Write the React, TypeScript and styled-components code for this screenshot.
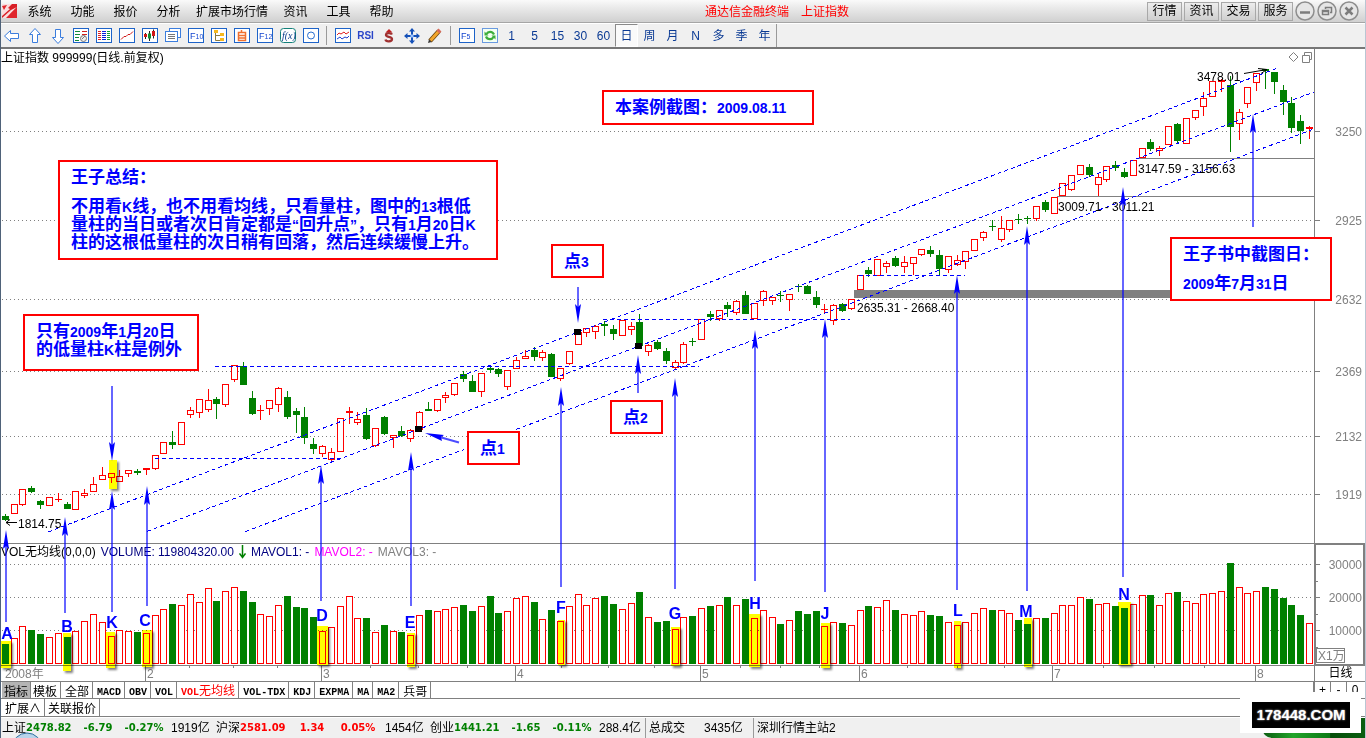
import React from "react";
import styled, { createGlobalStyle } from "styled-components";

const GlobalStyle = createGlobalStyle`
  *, *::before, *::after { box-sizing: border-box; }
  html, body { margin: 0; background: #fff; }
  body {
    font: 12px/16px "Liberation Sans", "Noto Sans CJK SC", sans-serif;
    color: #000;
  }
  button { font: inherit; color: inherit; margin: 0; padding: 0; border: 0; background: none; }
`;

const RED = "#ff0000";
const GREEN = "#008000";
const BLUE = "#0000ff";
const GRAY = "#808080";

/* ---------- data ---------- */

type Bar = [string, number, number, number, number, number];

/* colour, high, body top, body bottom, low, volume top */
const BARS: Bar[] = [
  ["G", 514, 516, 520, 521, 644], ["R", 504, 504, 514, 514, 638], ["R", 489, 489, 505, 506, 626],
  ["G", 486, 488, 492, 493, 630], ["G", 500, 501, 505, 509, 634], ["R", 497, 497, 506, 506, 637],
  ["R", 493, 499, 500, 502, 633], ["G", 502, 504, 509, 509, 637], ["R", 491, 491, 510, 510, 631],
  ["R", 489, 493, 496, 498, 621], ["R", 477, 484, 492, 492, 614], ["R", 467, 475, 480, 480, 622],
  ["R", 473, 473, 478, 483, 636], ["R", 470, 476, 482, 482, 630], ["R", 470, 470, 474, 477, 631],
  ["G", 469, 471, 473, 475, 632], ["R", 468, 468, 470, 475, 633], ["R", 455, 455, 469, 470, 615],
  ["R", 442, 442, 454, 454, 609], ["G", 431, 442, 445, 449, 604], ["R", 422, 422, 445, 445, 605],
  ["R", 407, 410, 415, 418, 594], ["R", 399, 399, 413, 418, 602], ["R", 389, 400, 410, 412, 588],
  ["G", 397, 399, 404, 419, 601], ["R", 384, 384, 405, 407, 591], ["R", 365, 365, 380, 382, 587],
  ["G", 362, 366, 385, 385, 591], ["G", 391, 398, 414, 415, 602], ["R", 405, 410, 411, 420, 614],
  ["R", 400, 400, 409, 415, 616], ["R", 387, 388, 405, 412, 605], ["G", 391, 397, 417, 419, 596],
  ["G", 408, 411, 415, 433, 607], ["G", 407, 417, 438, 444, 608], ["G", 438, 444, 449, 454, 617],
  ["R", 445, 446, 454, 457, 631], ["R", 448, 452, 460, 461, 627], ["R", 418, 418, 452, 452, 606],
  ["R", 407, 411, 413, 424, 596], ["R", 412, 419, 423, 425, 618], ["G", 408, 415, 439, 440, 618],
  ["R", 428, 428, 446, 447, 632], ["G", 416, 417, 434, 435, 625], ["R", 435, 435, 438, 448, 631],
  ["G", 426, 431, 436, 437, 632], ["R", 429, 430, 439, 442, 635], ["R", 411, 412, 430, 430, 615],
  ["G", 402, 409, 411, 411, 610], ["R", 399, 399, 411, 412, 611], ["R", 392, 395, 398, 403, 609],
  ["R", 383, 383, 395, 396, 607], ["G", 371, 374, 379, 382, 605], ["G", 375, 381, 392, 392, 611],
  ["R", 373, 373, 392, 397, 606], ["G", 366, 368, 370, 373, 596], ["G", 368, 369, 374, 377, 613],
  ["R", 370, 370, 387, 390, 611], ["R", 357, 360, 369, 369, 598], ["R", 350, 356, 359, 359, 596],
  ["G", 347, 350, 357, 361, 602], ["R", 350, 352, 358, 361, 619], ["G", 353, 354, 377, 377, 610],
  ["R", 368, 368, 379, 381, 621], ["R", 351, 351, 364, 365, 606], ["R", 332, 332, 345, 345, 594],
  ["R", 328, 328, 333, 337, 605], ["R", 325, 326, 332, 339, 598], ["G", 321, 324, 326, 336, 596],
  ["G", 325, 329, 334, 340, 604], ["R", 320, 320, 336, 336, 609], ["R", 322, 326, 330, 335, 603],
  ["G", 314, 322, 346, 346, 592], ["R", 344, 345, 352, 356, 617], ["G", 340, 342, 349, 350, 622],
  ["G", 348, 351, 361, 364, 621], ["R", 360, 362, 368, 370, 629], ["R", 342, 344, 363, 364, 617],
  ["G", 338, 341, 342, 346, 616], ["R", 319, 319, 340, 340, 608], ["G", 311, 314, 317, 321, 606],
  ["R", 310, 310, 319, 321, 605], ["G", 302, 305, 309, 317, 597], ["R", 300, 301, 313, 315, 605],
  ["G", 291, 295, 314, 314, 599], ["R", 303, 303, 319, 319, 618], ["R", 290, 291, 301, 306, 610],
  ["R", 297, 297, 301, 305, 617], ["G", 291, 295, 296, 302, 624], ["R", 294, 294, 300, 311, 620],
  ["G", 284, 286, 287, 292, 611], ["G", 285, 286, 294, 294, 614], ["G", 291, 297, 305, 308, 611],
  ["R", 304, 309, 310, 313, 626], ["R", 304, 305, 321, 325, 622], ["G", 303, 304, 311, 312, 623],
  ["R", 299, 299, 309, 310, 625], ["R", 275, 275, 290, 290, 610], ["G", 267, 270, 274, 277, 606],
  ["R", 259, 259, 276, 276, 607], ["R", 261, 263, 267, 273, 600], ["G", 256, 258, 266, 267, 610],
  ["R", 256, 262, 267, 273, 614], ["R", 257, 257, 264, 275, 615], ["R", 249, 249, 255, 256, 611],
  ["G", 246, 250, 254, 257, 615], ["G", 250, 255, 269, 275, 616], ["R", 256, 256, 270, 273, 622],
  ["R", 255, 260, 265, 266, 625], ["R", 251, 251, 262, 269, 622], ["R", 239, 239, 251, 251, 613],
  ["R", 231, 232, 238, 241, 608], ["G", 220, 226, 227, 231, 610], ["R", 216, 228, 240, 242, 610],
  ["R", 220, 220, 230, 232, 613], ["G", 214, 219, 220, 224, 620], ["G", 216, 218, 219, 224, 624],
  ["R", 206, 206, 219, 221, 618], ["G", 200, 202, 210, 212, 618], ["R", 197, 197, 214, 214, 613],
  ["R", 183, 183, 196, 196, 605], ["R", 175, 175, 190, 191, 605], ["R", 165, 165, 175, 175, 597],
  ["G", 164, 167, 175, 177, 599], ["R", 173, 177, 185, 196, 604], ["R", 166, 166, 180, 182, 603],
  ["G", 161, 165, 168, 171, 606], ["G", 168, 172, 177, 178, 608], ["R", 160, 160, 176, 176, 604],
  ["R", 148, 148, 158, 158, 595], ["G", 139, 142, 149, 151, 595], ["R", 146, 148, 151, 156, 605],
  ["R", 126, 126, 145, 145, 593], ["G", 123, 124, 141, 143, 592], ["R", 118, 118, 144, 144, 601],
  ["R", 110, 110, 118, 120, 603], ["R", 92, 98, 107, 116, 594], ["R", 81, 81, 97, 97, 593],
  ["R", 79, 80, 82, 92, 591], ["G", 76, 85, 127, 152, 563], ["R", 109, 112, 124, 140, 587],
  ["R", 87, 87, 104, 108, 593], ["R", 73, 73, 83, 91, 591], ["G", 69, 69, 71, 89, 587],
  ["G", 72, 72, 82, 94, 589], ["G", 85, 90, 102, 115, 598], ["G", 97, 103, 128, 133, 605],
  ["G", 115, 121, 131, 144, 615], ["R", 126, 127, 129, 139, 623],
];

const barX = (i: number) => 2 + Math.floor(i * 8.8125 + 0.33);

const PRICE_LEVELS: [number, string][] = [
  [131, "3250"], [220, "2925"], [299, "2632"], [371, "2369"], [436, "2132"], [494, "1919"],
];
const VOLUME_LEVELS: [number, string][] = [[564, "30000"], [597, "20000"], [630, "10000"]];

const MONTHS: [number, string][] = [
  [145, "2"], [321, "3"], [515, "4"], [700, "5"], [859, "6"], [1052, "7"], [1255, "8"],
];
const WEEK_TICKS = [189, 233, 277, 370, 418, 467, 561, 608, 654, 740, 780, 819, 907, 957, 1004, 1103, 1154, 1204];

/* x, tip y, tail y */
const ARROWS: [number, number, number][] = [
  [6, 530, 622], [65, 517, 613], [112, 491, 612], [112, 461, 386], [147, 486, 606], [321, 465, 601],
  [411, 452, 606], [561, 387, 587], [675, 378, 589], [755, 330, 581], [825, 319, 592], [957, 275, 590],
  [1027, 226, 591], [1123, 187, 577], [1253, 114, 227], [578, 323, 287], [638, 355, 393],
];

/* letter, centre x, baseline, then the yellow marker: x, y, width, height */
const MARKS: [string, number, number, number, number, number, number][] = [
  ["A", 7, 639, 1, 641, 10, 27], ["B", 67, 632, 63, 633, 8, 38], ["K", 112, 628, 106, 632, 9, 36],
  ["C", 145, 626, 142, 630, 10, 37], ["D", 322, 621, 317, 626, 11, 39], ["E", 410, 628, 407, 633, 8, 34],
  ["F", 561, 613, 558, 620, 7, 45], ["G", 675, 619, 671, 627, 9, 39], ["H", 755, 609, 749, 614, 11, 53],
  ["J", 825, 619, 821, 623, 9, 45], ["L", 958, 616, 954, 621, 7, 47], ["M", 1026, 617, 1024, 618, 8, 49],
  ["N", 1124, 600, 1118, 602, 13, 63],
];

/* ---------- shell ---------- */

const Shell = styled.main`
  position: relative;
  display: flex;
  flex-direction: column;
  min-height: 100vh;
  overflow: hidden;
  background: #fff;
  &::before, &::after {
    content: "";
    position: absolute;
    top: 0;
    bottom: 0;
    width: 1px;
    z-index: 3;
  }
  &::before { left: 0; background: #4f6279; }
  &::after { right: 0; background: #b9c6d3; }
`;

/* ---------- menu bar ---------- */

const MenuBar = styled.header`
  display: flex;
  align-items: center;
  height: 23px;
  padding: 0 7px 0 2px;
  border-bottom: 1px solid #a5a5a5;
  background: linear-gradient(#fafafa 0, #ececec 30%, #d2d2d2 95%);
`;
const Menus = styled.nav`
  display: flex;
`;
const MenuItem = styled.button`
  min-width: 43px;
  padding: 1px 6px 0;
  white-space: nowrap;
`;
const AppTitle = styled.h1`
  flex: 1;
  display: flex;
  justify-content: center;
  gap: 12px;
  margin: 0;
  padding: 1px 0 0 4px;
  font-size: 12px;
  font-weight: 400;
  color: ${RED};
  white-space: nowrap;
`;
const QuickLinks = styled.div`
  display: flex;
  align-items: center;
  gap: 2px;
`;
const QuickButton = styled.button`
  width: 35px;
  height: 19px;
  border: 1px solid #a8a8a8;
  background: linear-gradient(#ececec, #cfcfcf);
  line-height: 16px;
`;
const WindowButton = styled.button`
  display: flex;
  width: 20px;
  height: 20px;
`;

/* ---------- toolbar ---------- */

const Toolbar = styled.div`
  display: flex;
  align-items: center;
  height: 26px;
  background: #f0f0f0;
  border-top: 1px solid #fff;
  border-bottom: 2px solid #777;
`;
const Tool = styled.button<{ $on?: boolean }>`
  display: flex;
  flex: 0 0 23px;
  align-items: center;
  justify-content: center;
  height: 23px;
  color: #0a3a94;
  ${(p) => p.$on && "background: #fafafa; border: 1px solid #fff; border-top-color: #8a8a8a; border-left-color: #8a8a8a;"}
`;
const ToolGap = styled.span`
  flex: 0 0 9px;
  height: 19px;
  background: linear-gradient(90deg, transparent 4px, #9a9a9a 4px, #9a9a9a 5px, transparent 5px);
`;
const PeriodGroup = styled.div`
  display: flex;
  height: 23px;
  margin-left: -1px;
  border-right: 1px solid #9a9a9a;
`;
const RsiLabel = styled.span`
  color: #2a45c8;
  font-size: 10px;
  font-weight: 700;
`;

/* ---------- chart ---------- */

const ChartArea = styled.section`
  position: relative;
`;
const Pane = styled.div<{ $h: number }>`
  position: relative;
  display: flex;
  height: ${(p) => p.$h}px;
`;
const Plot = styled.svg`
  flex: 1;
  min-width: 0;
  height: 100%;
  display: block;
`;
const Axis = styled.svg`
  flex: 0 0 52px;
  height: 100%;
  display: block;
  border-left: 1px solid ${GRAY};
`;
const VolumeAxis = styled(Axis)`
  flex-basis: 51px;
  margin-right: 1px;
  border: 2px solid ${GRAY};
`;
const Period = styled.div`
  flex: 0 0 52px;
  border-left: 1px solid ${GRAY};
  border-bottom: 1px solid ${GRAY};
  line-height: 15px;
  text-align: center;
`;
const PaneTitle = styled.div`
  position: absolute;
  top: 1px;
  left: 1px;
  display: flex;
  gap: 5px;
  white-space: nowrap;
`;
const PaneTools = styled.div`
  position: absolute;
  top: 2px;
  right: 53px;
`;
const Ink = styled.span<{ $c: string }>`
  color: ${(p) => p.$c};
`;
const Overlay = styled.svg`
  position: absolute;
  inset: 0;
  width: 100%;
  height: 100%;
  pointer-events: none;
`;
const MarkLayer = styled(Overlay)`
  mix-blend-mode: multiply;
  rect { fill: #ffff00; filter: drop-shadow(2px 2px 1px rgba(0, 0, 0, 0.5)); }
`;
const Callout = styled.div<{ $x: number; $y: number; $w: number; $h: number }>`
  position: absolute;
  left: ${(p) => p.$x}px;
  top: ${(p) => p.$y - 49}px;
  width: ${(p) => p.$w}px;
  height: ${(p) => p.$h}px;
  padding: 7px 12px 5px 11px;
  border: 2px solid ${RED};
  background: #fff;
  color: ${BLUE};
  font-size: 17px;
  line-height: 18px;
  font-weight: 700;
  white-space: nowrap;
  p { margin: 0; }
  p.lead { margin-bottom: 11px; }
  b { font-size: 14px; }
`;

/* ---------- footer ---------- */

const TabRow = styled.div`
  display: flex;
  height: 17px;
  padding-left: 2px;
  border-bottom: 1px solid ${GRAY};
`;
const Tab = styled.button<{ $on?: boolean; $hot?: boolean }>`
  padding: 0 3px 0 4px;
  border-right: 1px solid ${GRAY};
  background: ${(p) => (p.$on ? "#b4b4b4" : "#fff")};
  color: ${(p) => (p.$hot ? RED : "#000")};
  font: 12px/15px "Noto Sans CJK SC", sans-serif;
  white-space: nowrap;
  span { font: 700 10px/15px "Liberation Mono", monospace; }
`;
const PageTab = styled(Tab)`
  padding: 0 2px;
  & + & { padding: 0 3px 0 2px; }
`;
const ExtraRow = styled(TabRow)`
  height: 18px;
  button { line-height: 16px; padding: 0 3px; }
`;
const ZoomKeys = styled.div`
  display: flex;
  margin-left: auto;
  padding-right: 3px;
  border-left: 2px solid ${GRAY};
`;
const ZoomKey = styled.button`
  width: 16px;
  border-right: 1px solid ${GRAY};
  line-height: 16px;
  &:last-child { border-right: 0; }
`;
const StatusBar = styled.footer`
  display: flex;
  align-items: center;
  flex: 1;
  height: 21px;
  padding-left: 2px;
  border-top: 1px solid #fff;
  background: #f0f0f0;
  white-space: nowrap;
`;
const Quote = styled.div<{ $c: string }>`
  display: grid;
  grid-template-columns: 24px 46px 52px 40px 52px;
  align-items: center;
  color: #000;
  b {
    color: ${(p) => p.$c};
    font: 700 10px/16px "DejaVu Sans", sans-serif;
    text-align: center;
  }
  b:nth-of-type(1) { text-align: left; }
  span:last-child { padding-left: 7px; }
`;
const StatusCell = styled.div<{ $w?: number }>`
  display: flex;
  gap: 19px;
  align-items: center;
  height: 20px;
  margin-left: 1px;
  padding-left: 3px;
  border-left: 1px solid #9a9a9a;
  ${(p) => p.$w && `width: ${p.$w}px;`}
`;
const Orb = styled.svg`
  position: absolute;
  left: 12px;
  bottom: 0;
  z-index: 2;
`;
const GreenBadge = styled.div`
  position: absolute;
  right: 0;
  bottom: 0;
  width: 104px;
  height: 20px;
  border-radius: 0 0 0 10px;
  background: linear-gradient(90deg, #0b5a10, #22a42a 30%, #0d7a16 65%, #064d0a 66%, #0a5f10);
`;
const Stamp = styled.div`
  position: absolute;
  right: 5px;
  bottom: 5px;
  width: 121px;
  height: 41px;
  padding: 10px 11px 5px 12px;
  background: #fff;
  z-index: 2;
  span {
    display: block;
    height: 26px;
    background: #000;
    color: #fff;
    font: 700 15px/26px "Liberation Sans", sans-serif;
    text-align: center;
    text-shadow: 0 0 2px #ccc;
  }
`;

/* ---------- icons ---------- */

const Glyph = ({ children, ...rest }: React.SVGProps<SVGSVGElement>) => (
  <svg width="16" height="16" viewBox="0 0 16 16" fill="none" aria-hidden="true" {...rest}>{children}</svg>
);
const Frame = ({ c = "#1d63c8", children }: { c?: string; children?: React.ReactNode }) => (
  <Glyph><rect x="0.5" y="0.5" width="15" height="14" fill="#fff" stroke={c} />{children}</Glyph>
);
const FrameText = ({ a, s }: { a: string; s: string }) => (
  <Frame>
    <text x="2" y="11" fontSize="9" fill="#1546d0" fontFamily="Liberation Sans">
      {a}<tspan fontSize="7">{s}</tspan>
    </text>
  </Frame>
);
const arrowShape = "M.5 8 L6.500 2.500 V5.500 H14.500 V10.500 H6.500 V13.500 Z";
const turn = (deg: number) => (
  <Glyph><path d={arrowShape} transform={`rotate(${deg} 8 8)`} fill="#fff" stroke="#3b7ddd" /></Glyph>
);
const rows = (c: string, x: number, w: number) =>
  [3, 5, 7, 9, 11].map((y) => <path key={c + y} d={`M${x} ${y}.5h${w}`} stroke={c} />);

const TOOLS: [string, React.ReactNode][] = [
  ["后退", turn(0)],
  ["上翻", turn(90)],
  ["下翻", turn(270)],
  ["报价", <Frame key="q"><path d="M2 3.500h5M2 6.500h5M2 9.500h4M2 12.500h4" stroke="#108a3c" /><path d="M9 3.500h5M9 6.500h5" stroke="#d02020" /><circle cx="10.500" cy="10.500" r="3" fill="#eee" stroke="#777" /><path d="M9 11l3-3" stroke="#777" /></Frame>],
  ["列表", <Frame key="l">{rows("#e02020", 2, 3)}{rows("#0a1ae0", 6, 4)}{rows("#10a030", 11, 3)}</Frame>],
  ["分时", <Frame key="m"><path d="M2 11.500L5 8.500H7L9 6.500H11L14 3.500" stroke="#d01818" /></Frame>],
  ["K线", <Frame key="k"><path d="M3.500 5v6M7.500 3v10M11.500 1.500v9" stroke="#222" /><path d="M3.500 6v3M11.500 3v5" stroke="#d01818" strokeWidth="3" /><path d="M7.500 5.500v5" stroke="#109030" strokeWidth="3" /></Frame>],
  ["多窗", <Glyph key="w"><rect x="4.500" y=".5" width="11" height="9" fill="#fff" stroke="#3b7ddd" /><rect x=".5" y="3.500" width="12" height="10" fill="#fff" stroke="#3b7ddd" /><path d="M3 6.500h7M3 8.500h7M3 10.500h7" stroke="#777" /></Glyph>],
  ["F10", <FrameText key="f10" a="F" s="10" />],
  ["板块", <Frame key="b"><path d="M4.500 4v8.500H9M4.500 7.500H9" stroke="#8a7a40" /><rect x="3" y="2" width="4" height="3" fill="#f5b81e" /><rect x="9" y="5" width="4" height="3" fill="#f5b81e" /><rect x="9" y="10" width="4" height="3" fill="#f5b81e" /></Frame>],
  ["自选", <Frame key="z"><path d="M7.500 2v2M4.500 4.500h7v8h-7zM5 7.500h6M5 10h6" stroke="#f07030" strokeWidth="1.500" /></Frame>],
  ["F12", <FrameText key="f12" a="F" s="12" />],
  ["公式", <Glyph key="fx"><rect x=".5" y=".5" width="15" height="14" rx="3" fill="#fff" stroke="#12807a" /><text x="2" y="11" fontSize="10" fontStyle="italic" fill="#0b3c8c" fontFamily="Liberation Serif">f(x)</text></Glyph>],
  ["圆", <Frame key="o"><circle cx="8" cy="7.500" r="3.500" stroke="#2a6fd0" /></Frame>],
];
const TOOLS_2: [string, React.ReactNode][] = [
  ["叠加", <Frame key="v"><path d="M2 7l2-2 2 1 3-2 2 2 3-2" stroke="#e02020" /><path d="M2 11l3-2 2 2 3-2 2 1 2-2" stroke="#2040d0" /></Frame>],
  ["RSI", <RsiLabel key="r">RSI</RsiLabel>],
  ["资金", <Glyph key="s"><path d="M8 1L11.500 4.500H4.500Z" fill="#c02020" /><path d="M11 6.500C10 4.500 5 4.500 5 7C5 9.500 11 8 11 11C11 14 5 14 4.500 11.500" stroke="#a03030" strokeWidth="2.300" /></Glyph>],
  ["移动", <Glyph key="mv" fill="#1450b8"><path d="M8 0l3 3.500H5zM8 16l3-3.500H5zM0 8l3.500-3v6zM16 8l-3.500-3v6z" /><path d="M7 3h2v10H7zM3 7h10v2H3z" /><rect x="6.500" y="6.500" width="3" height="3" fill="#9cc4ff" /></Glyph>],
  ["画线", <Glyph key="p"><path d="M3 13L12 3" stroke="#6a4410" strokeWidth="4.500" /><path d="M3.500 12.500L12 3" stroke="#f3a62c" strokeWidth="3" /><path d="M11 4L13 2" stroke="#d86a5a" strokeWidth="4" /><path d="M1 15l1-3.500L4.500 14z" fill="#333" /></Glyph>],
];
const TOOLS_3: [string, React.ReactNode][] = [
  ["F5", <FrameText key="f5" a="F" s="5" />],
  ["刷新", <Glyph key="rf"><rect x=".5" y=".5" width="15" height="14" fill="#f4fff4" stroke="#6a9ae0" /><path d="M12 6.500C10.500 3 6 3 4.500 6M4 8.500C5.500 12 10 12 11.500 9" stroke="#3cae3c" strokeWidth="2.200" /><path d="M2.500 3.500v4h4zM13.500 11.500v-4h-4z" fill="#3cae3c" /></Glyph>],
];
const PERIODS = ["1", "5", "15", "30", "60", "日", "周", "月", "N", "多", "季", "年"];

/* ---------- drawing parts ---------- */

const Grid = ({ levels }: { levels: [number, string][] }) => (
  <g stroke={GRAY} strokeDasharray="1 3">
    {levels.map(([y]) => <line key={y} x1="2" x2="100%" y1={y + 0.5} y2={y + 0.5} />)}
  </g>
);

const Candle = ({ i, bar }: { i: number; bar: Bar }) => {
  const [kind, high, top, bottom, low] = bar;
  const x = barX(i);
  const c = kind === "R" ? RED : GREEN;
  const hollow = kind === "R" && bottom - top > 2;
  return (
    <g>
      <rect x={x + 3} y={high} width="1" height={low - high} fill={c} />
      {hollow
        ? <rect x={x + 0.5} y={top + 0.5} width="6" height={bottom - top - 1} fill="#fff" stroke={c} />
        : <rect x={x} y={top} width="7" height={bottom - top} fill={c} />}
    </g>
  );
};

const VolumeBar = ({ i, bar }: { i: number; bar: Bar }) => {
  const x = barX(i);
  const top = bar[5];
  return bar[0] === "R"
    ? <rect x={x + 0.5} y={top + 0.5} width="6" height={663 - top} fill="#fff" stroke={RED} />
    : <rect x={x} y={top} width="7" height={664 - top} fill={GREEN} />;
};

const Arrow = ({ x, tip, tail }: { x: number; tip: number; tail: number }) => {
  const d = tail > tip ? 1 : -1;
  return (
    <g>
      <line x1={x} x2={x} y1={tip + 8 * d} y2={tail} stroke={BLUE} strokeOpacity="0.6" strokeWidth="2" />
      <path d={`M${x} ${tip} l3 ${19 * d} l-3 ${-3 * d} l-3 ${3 * d} z`} fill={BLUE} />
    </g>
  );
};

const PriceNote = ({ x, y, children }: { x: number; y: number; children: string }) => (
  <text x={x} y={y} fontSize="12">{children}</text>
);

const word = (s: string) =>
  s.split(/([A-Z0-9-]+)/).filter(Boolean).map((t, i) => (/[A-Z0-9]/.test(t) ? <span key={i}>{t}</span> : t));

const QUOTES = [
  { name: "上证", v: ["2478.82", "-6.79", "-0.27%"], amount: "1919亿", c: GREEN },
  { name: "沪深", v: ["2581.09", "1.34", "0.05%"], amount: "1454亿", c: RED },
  { name: "创业", v: ["1441.21", "-1.65", "-0.11%"], amount: "288.4亿", c: GREEN },
];

export default function App() {
  return (
    <Shell>
      <GlobalStyle />
      <MenuBar>
        <Glyph>
          <rect y="1" width="15" height="14" fill="#d81f26" />
          <path d="M0 1h10L6 5l2 1L0 13zM15 4L6 13 4 15H0l9-8z" fill="#fff" fillOpacity=".85" />
          <path d="M0 3l5-1-3 5zM9 10l6-6v11H5z" fill="#e0262c" />
        </Glyph>
        <Menus>
          {["系统", "功能", "报价", "分析", "扩展市场行情", "资讯", "工具", "帮助"].map((m) => <MenuItem key={m}>{m}</MenuItem>)}
        </Menus>
        <AppTitle><span>通达信金融终端</span><span>上证指数</span></AppTitle>
        <QuickLinks>
          {["行情", "资讯", "交易", "服务"].map((m) => <QuickButton key={m}>{m}</QuickButton>)}
          {[
            ["最小化", "M5 11.500h10"],
            ["还原", "M8.500 8V6.500h6v5H13M5.500 9.500h6v4h-6zM5.500 10.500h6"],
            ["关闭", "M6.500 6.500l7 7M13.500 6.500l-7 7"],
          ].map(([label, d]) => (
            <WindowButton key={label} aria-label={label}>
              <svg width="20" height="20" fill="none" stroke="#7c7c7c">
                <circle cx="10" cy="10" r="9" fill="#e6e6e6" stroke="#8e8e8e" strokeWidth="1.500" />
                <path d={d} strokeWidth={label === "还原" ? 1.5 : 2.5} />
              </svg>
            </WindowButton>
          ))}
        </QuickLinks>
      </MenuBar>

      <Toolbar>
        {TOOLS.map(([n, icon]) => <Tool key={n} aria-label={n}>{icon}</Tool>)}
        <ToolGap />
        {TOOLS_2.map(([n, icon]) => <Tool key={n} aria-label={n}>{icon}</Tool>)}
        <ToolGap />
        {TOOLS_3.map(([n, icon]) => <Tool key={n} aria-label={n}>{icon}</Tool>)}
        <PeriodGroup>
          {PERIODS.map((p) => <Tool key={p} $on={p === "日"}>{p}</Tool>)}
        </PeriodGroup>
      </Toolbar>

      <ChartArea>
        <Pane $h={494}>
          <Plot>
            <g transform="translate(0 -49)" shapeRendering="crispEdges">
              <Grid levels={PRICE_LEVELS} />
              <rect x="854" y="290" width="460" height="8" fill={GRAY} />
              <rect x="1138" y="158" width="177" height="1" fill={GRAY} />
              <rect x="1057" y="196" width="258" height="1" fill={GRAY} />
              {BARS.map((b, i) => <Candle key={i} i={i} bar={b} />)}
              <g stroke={BLUE} strokeDasharray="4 3">
                <path d="M155 458.500H340M215 366.500H699M603 319.500H850M859 275.500H965" />
                <path d="M48 532L1279 67.500M147 531.500L1314 92M245.500 531.500L464 449.500M516 429.500L1314 129" />
              </g>
              <rect x="574" y="329" width="7" height="6" />
              <rect x="635" y="343" width="7" height="6" />
              <rect x="415" y="426" width="7" height="6" />
            </g>
            <g transform="translate(0 -49)">
              <PriceNote x={18} y={528}>1814.75</PriceNote>
              <PriceNote x={857} y={312}>2635.31 - 2668.40</PriceNote>
              <PriceNote x={1058} y={211}>3009.71 - 3011.21</PriceNote>
              <PriceNote x={1138} y={173}>3147.59 - 3156.63</PriceNote>
              <PriceNote x={1197} y={81}>3478.01</PriceNote>
              <path d="M6 522.500h11M10 519.500l-4 3 4 3M1244 73.500L1267 69.500M1258 68.500l9 1-6 4" stroke="#000" fill="none" />
            </g>
          </Plot>
          <Axis>
            <g transform="translate(0 -49)" fill={GRAY}>
              {PRICE_LEVELS.map(([y, t]) => (
                <g key={t}>
                  <rect y={y} width="5" height="1" />
                  <text x="47" y={y + 5} fontSize="12" textAnchor="end">{t}</text>
                </g>
              ))}
            </g>
          </Axis>
          <PaneTitle>上证指数 999999(日线.前复权)</PaneTitle>
          <PaneTools>
            <svg width="24" height="12" fill="none" stroke={GRAY}>
              <path d="M4.500 1.500l4.500 4.500-4.500 4.500L0 6z" />
              <path d="M13.500 4.500h7v7h-7zM15.500 4V1.500h7v7H21" />
            </svg>
          </PaneTools>
        </Pane>

        <Pane $h={123}>
          <Plot>
            <g transform="translate(0 -543)" shapeRendering="crispEdges">
              <rect y="543" width="100%" height="1" fill={GRAY} />
              <Grid levels={VOLUME_LEVELS} />
              {BARS.map((b, i) => <VolumeBar key={i} i={i} bar={b} />)}
              <rect y="665" width="100%" height="1" fill={GRAY} />
            </g>
          </Plot>
          <VolumeAxis>
            <g transform="translate(-1 -545)" fill={GRAY}>
              {VOLUME_LEVELS.map(([y, t]) => (
                <g key={t}>
                  <rect y={y} width="5" height="1" />
                  <rect y={y + 17} width="3" height="1" />
                  <text x="47" y={y + 5} fontSize="12" textAnchor="end">{t}</text>
                </g>
              ))}
              <rect x="1.500" y="648.500" width="28" height="14" fill="#fff" stroke={GRAY} />
              <text x="3" y="660" fontSize="12">X1万</text>
            </g>
          </VolumeAxis>
          <PaneTitle>
            <span>VOL无均线(0,0,0)</span>
            <Ink $c="#000080">VOLUME: 119804320.00</Ink>
            <svg width="7" height="16" stroke={GREEN} fill="none" strokeWidth="1.500"><path d="M3.500 1v12M.5 9.500l3 4 3-4" /></svg>
            <Ink $c="#000080">MAVOL1: -</Ink>
            <Ink $c="#ff00ff">MAVOL2: -</Ink>
            <Ink $c={GRAY}>MAVOL3: -</Ink>
          </PaneTitle>
        </Pane>

        <Pane $h={16}>
          <Plot>
            <g fill={GRAY} fontSize="12" shapeRendering="crispEdges">
              <text x="5" y="12">2008年</text>
              {MONTHS.map(([x, t]) => (
                <g key={t}><rect x={x} width="1" height="16" /><text x={x + 2} y="12">{t}</text></g>
              ))}
              {WEEK_TICKS.map((x) => <rect key={x} x={x} width="1" height="2" />)}
              <rect y="15" width="100%" height="1" />
            </g>
          </Plot>
          <Period>日线</Period>
        </Pane>

        <MarkLayer>
          <g transform="translate(0 -49)">
            <rect x="109" y="460" width="8" height="29" />
            {MARKS.map(([l, , , x, y, w, h]) => <rect key={l} x={x} y={y} width={w} height={h} />)}
          </g>
        </MarkLayer>
        <Overlay>
          <g transform="translate(0 -49)">
            {ARROWS.map(([x, tip, tail]) => <Arrow key={`${x}-${tip}`} x={x} tip={tip} tail={tail} />)}
            <path d="M459 442.500L436 436" stroke={BLUE} strokeOpacity="0.7" strokeWidth="2" />
            <path d="M425 433l19 2-3 2 1 4z" fill={BLUE} />
            <g fill={BLUE} fontSize="16" fontWeight="700" textAnchor="middle">
              {MARKS.map(([l, x, y]) => <text key={l} x={x} y={y}>{l}</text>)}
            </g>
          </g>
        </Overlay>

        <Callout $x={602} $y={90} $w={212} $h={35}>本案例截图：<b>2009.08.11</b></Callout>
        <Callout $x={58} $y={160} $w={440} $h={100}>
          <p className="lead">王子总结：</p>
          <p>不用看<b>K</b>线，也不用看均线，只看量柱，图中的<b>13</b>根低</p>
          <p>量柱的当日或者次日肯定都是<b>“</b>回升点<b>”</b>，只有<b>1</b>月<b>20</b>日<b>K</b></p>
          <p>柱的这根低量柱的次日稍有回落，然后连续缓慢上升。</p>
        </Callout>
        <Callout $x={23} $y={314} $w={176} $h={57}>
          <p>只有<b>2009</b>年<b>1</b>月<b>20</b>日</p>
          <p>的低量柱<b>K</b>柱是例外</p>
        </Callout>
        <Callout $x={551} $y={244} $w={53} $h={34}>点<b>3</b></Callout>
        <Callout $x={610} $y={400} $w={53} $h={34}>点<b>2</b></Callout>
        <Callout $x={467} $y={431} $w={53} $h={34}>点<b>1</b></Callout>
        <Callout $x={1170} $y={237} $w={162} $h={64}>
          <p className="lead">王子书中截图日：</p>
          <p><b>2009</b>年<b>7</b>月<b>31</b>日</p>
        </Callout>
      </ChartArea>

      <TabRow>
        <PageTab $on>指标</PageTab>
        <PageTab>模板</PageTab>
        {["全部", "MACD", "OBV", "VOL", "VOL无均线", "VOL-TDX", "KDJ", "EXPMA", "MA", "MA2", "兵哥"].map((t) => (
          <Tab key={t} $hot={t === "VOL无均线"}>{word(t)}</Tab>
        ))}
        <ZoomKeys>
          {["+", "-", "0"].map((k) => <ZoomKey key={k}>{k}</ZoomKey>)}
        </ZoomKeys>
      </TabRow>
      <ExtraRow>
        <Tab>扩展∧</Tab>
        <Tab>关联报价</Tab>
      </ExtraRow>

      <StatusBar>
        {QUOTES.map((q) => (
          <Quote key={q.name} $c={q.c}>
            <span>{q.name}</span>
            {q.v.map((t) => <b key={t}>{t}</b>)}
            <span>{q.amount}</span>
          </Quote>
        ))}
        <StatusCell $w={107}><span>总成交</span><span>3435亿</span></StatusCell>
        <StatusCell>深圳行情主站2</StatusCell>
      </StatusBar>
      <Orb width="30" height="6"><circle cx="15" cy="16" r="15" fill="#b9d4ea" stroke="#2f6d9c" /></Orb>
      <GreenBadge />
      <Stamp><span>178448.COM</span></Stamp>
    </Shell>
  );
}
